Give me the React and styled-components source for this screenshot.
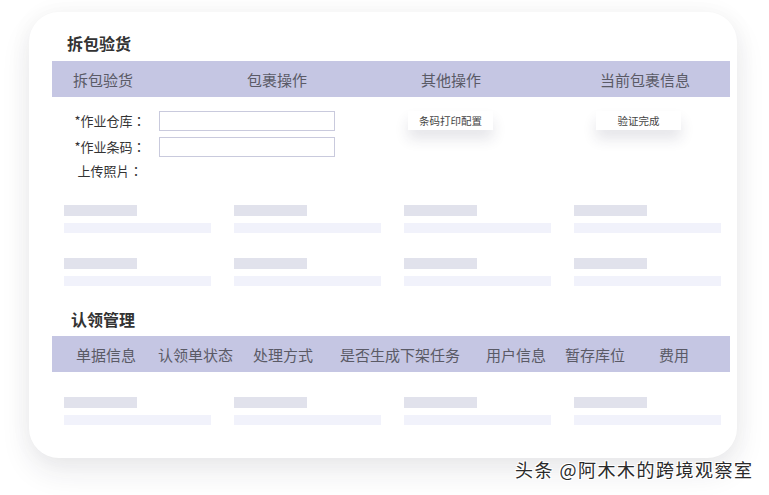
import React from 'react';
import styled, { createGlobalStyle } from 'styled-components';

const GlobalStyle = createGlobalStyle`
  html, body {
    margin: 0;
    padding: 0;
    background: #ffffff;
  }
  body {
    font-family: "Noto Sans CJK SC", "Noto Sans", sans-serif;
    color: #333;
  }
`;

const Page = styled.div`
  position: relative;
  width: 769px;
  height: 495px;
  overflow: hidden;
  padding: 12px 0 0 29px;
  box-sizing: border-box;
`;

const Card = styled.div`
  width: 708px;
  height: 446px;
  box-sizing: border-box;
  padding: 21px 7px 0 23px;
  background: #fff;
  border-radius: 30px;
  box-shadow: 0 14px 30px rgba(30, 30, 60, 0.09), 0 0 24px rgba(30, 30, 60, 0.04);
`;

const SectionTitle = styled.h3`
  margin: ${({ $mt }) => $mt || 0}px 0 ${({ $mb }) => $mb || 0}px ${({ $ml }) => $ml}px;
  font-size: 16px;
  line-height: 20px;
  font-weight: 700;
  color: #333;
`;

const HeaderBar = styled.div`
  height: 36px;
  background: #c5c6e3;
  display: ${({ $flex }) => ($flex ? 'flex' : 'grid')};
  grid-template-columns: 174px 174px 179px 1fr;
  align-items: center;
`;

const HeaderCell = styled.span`
  padding-left: ${({ $pl }) => $pl || 21}px;
  font-size: 15px;
  color: #5a5a66;
  white-space: nowrap;
`;

const Body = styled.div`
  display: grid;
  grid-template-columns: 348px 179px 1fr;
  padding-top: 14px;
`;

const Form = styled.div`
  display: grid;
  grid-template-columns: 86px 176px;
  grid-template-rows: 20px 20px 16px;
  column-gap: 6px;
  row-gap: 6px;
  padding-left: 15px;
`;

const Label = styled.span`
  font-family: "Noto Sans CJK TC", "Noto Sans CJK SC", sans-serif;
  font-size: 13px;
  line-height: ${({ $lh }) => $lh || 20}px;
  text-align: center;
  color: #333;
  white-space: nowrap;
`;

const Input = styled.div`
  height: 20px;
  box-sizing: border-box;
  border: 1px solid #c9cadd;
  background: #fff;
`;

const ButtonCell = styled.div`
  padding-left: ${({ $pl }) => $pl}px;
`;

const ActionButton = styled.div`
  width: 85px;
  height: 19px;
  display: flex;
  align-items: center;
  justify-content: center;
  background: #fff;
  font-size: 10.5px;
  color: #444;
  box-shadow: 0 9px 14px rgba(40, 40, 70, 0.12);
`;

const SkeletonGrid = styled.div`
  display: grid;
  grid-template-columns: repeat(4, 170px);
  padding-left: 12px;
  margin-top: ${({ $mt }) => $mt}px;
`;

const SkeletonCell = styled.div`
  display: flex;
  flex-direction: column;
  gap: 7px;
`;

const ShortBar = styled.div`
  width: 73px;
  height: 11px;
  background: #e1e2ec;
`;

const LongBar = styled.div`
  width: 147px;
  height: 10px;
  background: #f1f2fb;
`;

const Watermark = styled.div`
  position: absolute;
  left: 515px;
  top: 457px;
  font-size: 18px;
  line-height: 24px;
  letter-spacing: 1.5px;
  color: #2a2a2a;
  white-space: nowrap;
  text-shadow: 1px 1px 0 #fff, -1px -1px 0 #fff, 1px -1px 0 #fff, -1px 1px 0 #fff;
`;

const SkeletonRow = ({ mt }) => (
  <SkeletonGrid $mt={mt}>
    {[0, 1, 2, 3].map((i) => (
      <SkeletonCell key={i}>
        <ShortBar />
        <LongBar />
      </SkeletonCell>
    ))}
  </SkeletonGrid>
);

const claimColumns = [
  { text: '单据信息', pl: 24 },
  { text: '认领单状态', pl: 22 },
  { text: '处理方式', pl: 20 },
  { text: '是否生成下架任务', pl: 27 },
  { text: '用户信息', pl: 26 },
  { text: '暂存库位', pl: 19 },
  { text: '费用', pl: 34 },
];

const App = () => (
  <Page>
    <GlobalStyle />
    <Card>
      <SectionTitle $ml={15} $mb={8}>拆包验货</SectionTitle>
      <HeaderBar>
        <HeaderCell>拆包验货</HeaderCell>
        <HeaderCell>包裹操作</HeaderCell>
        <HeaderCell>其他操作</HeaderCell>
        <HeaderCell>当前包裹信息</HeaderCell>
      </HeaderBar>
      <Body>
        <Form>
          <Label>*作业仓库：</Label>
          <Input />
          <Label>*作业条码：</Label>
          <Input />
          <Label $lh={16}>上传照片：</Label>
        </Form>
        <ButtonCell $pl={8}>
          <ActionButton>条码打印配置</ActionButton>
        </ButtonCell>
        <ButtonCell $pl={17}>
          <ActionButton>验证完成</ActionButton>
        </ButtonCell>
      </Body>
      <SkeletonRow mt={26} />
      <SkeletonRow mt={25} />
      <SectionTitle $ml={19} $mt={23} $mb={7}>认领管理</SectionTitle>
      <HeaderBar $flex>
        {claimColumns.map((c) => (
          <HeaderCell key={c.text} $pl={c.pl}>{c.text}</HeaderCell>
        ))}
      </HeaderBar>
      <SkeletonRow mt={25} />
    </Card>
    <Watermark>头条 @阿木木的跨境观察室</Watermark>
  </Page>
);

export default App;
